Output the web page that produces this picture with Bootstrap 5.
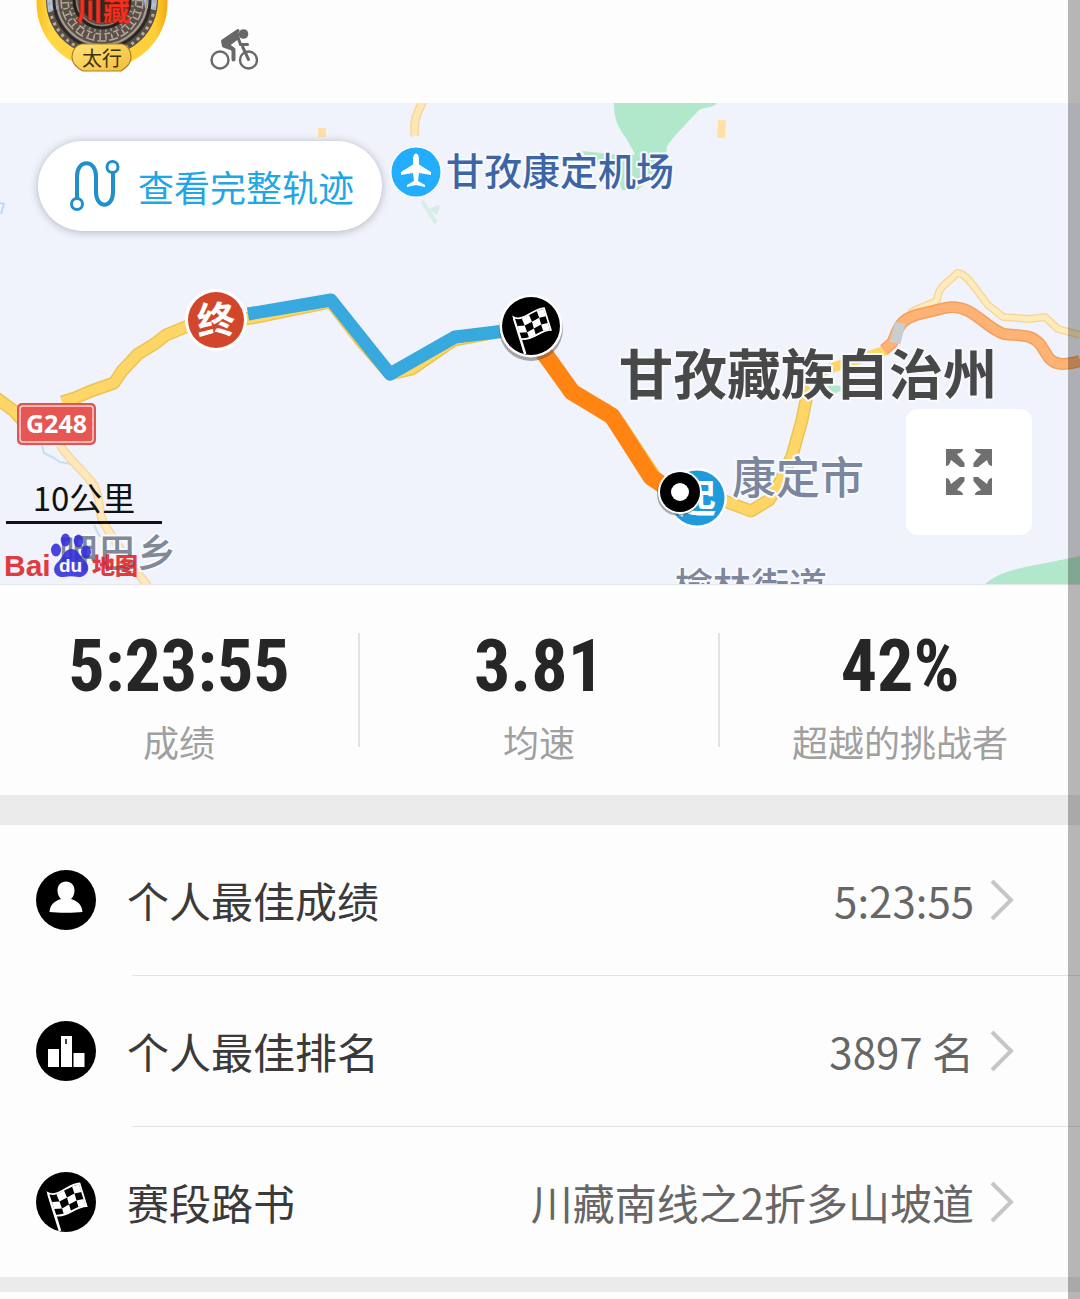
<!DOCTYPE html>
<html lang="zh-CN">
<head>
<meta charset="utf-8">
<meta name="viewport" content="width=device-width, initial-scale=1">
<title>赛段详情</title>
<link href="https://cdn.jsdelivr.net/npm/bootstrap@5.3.0/dist/css/bootstrap.min.css" rel="stylesheet">
<style>
body{font-family:"Noto Sans CJK SC","Noto Sans",sans-serif;background:#fdfdfd;color:#3a3a3a;overflow-x:hidden}
svg{display:block}
.seg-head{height:103px;padding-left:36px;gap:42px}
.bike{margin-top:28px}
.map-box{background:#f0f3fb;overflow:hidden;border-bottom:1px solid #e4e6ec}
.map-box>svg{width:100%;height:auto}
.track-btn{left:38px;top:38px;height:90px;padding:0 28px 0 32px;gap:16px;font-size:36px;line-height:48px;color:#1fa6e6;background:#fff;box-shadow:0 1px 8px rgba(60,60,80,.35)}
.track-btn:hover{background:#fff;color:#1fa6e6}
.full-btn{right:48px;bottom:49px;width:126px;height:126px;background:#fff;border-radius:12px}
.full-btn:hover{background:#fff}
.scale-bar{left:6px;top:374px;width:156px;height:47px;border-bottom:3px solid #111;font-size:33px;line-height:40px;color:#111}
.stats{padding:48px 0}
.stat-cell{height:114px}
.stat-cell:not(:last-child){border-right:2px solid #e3e3e3}
.stat-num{font-family:"Roboto Condensed",Roboto,sans-serif;font-weight:700;font-size:72px;line-height:68px;color:#262626}
.stat-label{font-size:36px;line-height:48px;padding-top:16px;color:#a0a0a0}
.band{height:30px;background:#ebebeb}
.band-thin{height:15px}
.info-row{height:150px;padding:0 66px 0 36px;gap:31px;font-size:42px;line-height:60px;color:#3a3a3a;text-decoration:none}
.info-val{color:#666}
.info-line{height:1px;margin-left:132px;background:#e4e4e4}
.edge-strip{right:0;top:0;bottom:0;width:12px;background:rgba(0,0,0,.28)}
</style>
<script src="https://cdn.jsdelivr.net/npm/bootstrap@5.3.0/dist/js/bootstrap.bundle.min.js"></script>
</head>
<body>
<svg width="0" height="0" class="position-absolute" aria-hidden="true">
  <defs>
    <symbol id="flag" viewBox="0 0 60 60">
      <circle cx="30" cy="30" r="30" fill="#000"/>
      <path d="M12.500 22 24 59" stroke="#fff" stroke-width="2.600" fill="none"/>
      <path d="M12 21C22 26 32 12 43.500 11.500L50.500 34C39 34 33 45 19.500 43.500Z" fill="#000" stroke="#fff" stroke-width="1.800"/>
      <path d="M20.500 22.500 28 18.500 31 25.500 23.500 29.500ZM36 14.500 43 12.500 45.500 20 38.500 21.500ZM16 30 23.500 29.500 26 36.500 18 37ZM31 25.500 38.500 21.500 40.500 28.500 33 32.500ZM26 36.500 33 32.500 35 39 28 42.500ZM40.500 28.500 47.500 27 49.500 33.500 42.500 35Z" fill="#fff"/>
    </symbol>
    <symbol id="chev" viewBox="0 0 24 42"><path d="M2 2 21 21 2 40" fill="none" stroke="#c6c6c6" stroke-width="4"/></symbol>
  </defs>
</svg>

<header class="seg-head d-flex align-items-start">
  <svg width="132" height="73" viewBox="36 0 132 73" role="img" aria-label="太行徽章">
    <defs>
      <linearGradient id="gold" x1="0" x2="1"><stop offset="0" stop-color="#fbbf1c"/><stop offset=".1" stop-color="#ffd645"/><stop offset=".9" stop-color="#ffcf38"/><stop offset="1" stop-color="#f3a90c"/></linearGradient>
      <linearGradient id="plate" x1="0" x2="1" y1="0" y2="1"><stop offset="0" stop-color="#ffe27a"/><stop offset="1" stop-color="#f4bd38"/></linearGradient>
    </defs>
    <circle cx="102" cy="3" r="65.500" fill="url(#gold)"/>
    <circle cx="102" cy="0" r="56" fill="#5b5048"/>
    <path d="M47 0h10l2 9-11 3zM157 0h-13l1 8 11 2z" fill="#a9c3dd"/>
    <g fill="none">
      <circle cx="102" cy="0" r="53" stroke="#b5aba0" stroke-width="3" stroke-dasharray="3 4"/>
      <circle cx="102" cy="0" r="48" stroke="#2c2825" stroke-width="3"/>
      <circle cx="102" cy="0" r="45" stroke="#a49a90" stroke-width="2"/>
      <circle cx="102" cy="0" r="41" stroke="#b3aaa0" stroke-width="1.500" stroke-dasharray="9 3"/>
      <circle cx="102" cy="0" r="37.500" stroke="#b3aaa0" stroke-width="5" stroke-dasharray="1.500 4.500"/>
      <circle cx="102" cy="0" r="34" stroke="#b3aaa0" stroke-width="1.500" stroke-dasharray="6 3"/>
      <circle cx="102" cy="0" r="31" stroke="#a1978c" stroke-width="3" stroke-dasharray="1.500 4"/>
      <circle cx="102" cy="0" r="28" stroke="#26211e" stroke-width="3"/>
      <circle cx="102" cy="0" r="25.500" stroke="#8c8379" stroke-width="1.500"/>
    </g>
    <circle cx="102" cy="0" r="22" fill="#2f2926"/>
    <text x="76" y="21" font-size="27" font-weight="900" fill="#f0321e" stroke="#8d1a12" stroke-width=".5" font-family="'Noto Sans CJK SC',sans-serif">川藏</text>
    <path d="M82 44h40c5 1 9 6 9 13 0 6-5 11-10 14H83c-6-3-11-8-11-14 0-7 4-12 10-13z" fill="url(#plate)" stroke="#a78227" stroke-width="1.200"/>
    <text x="102" y="66" font-size="20" text-anchor="middle" fill="#3b3212" font-family="'Noto Sans CJK SC',sans-serif">太行</text>
  </svg>
  <svg class="bike" width="48" height="43" viewBox="210 28 48 43" role="img" aria-label="骑行">
    <g fill="none" stroke="#686868" stroke-linecap="round" stroke-linejoin="round">
      <circle cx="220" cy="60" r="8.500" stroke-width="2.400"/><circle cx="248.500" cy="60" r="8.500" stroke-width="2.400"/>
      <path d="M238 30.500 222.500 41 223.500 46 233.500 49.500V59.500" stroke-width="3"/>
      <path d="M237.500 31.500 223.500 41.500 225.500 46 229 45 238.500 38Z" fill="#686868" stroke-width="2"/>
      <path d="M227 44.500 233.500 49.500V59.500" stroke-width="4"/>
      <path d="M237.500 36 240.500 44.500H247.500M242.500 46.500l6 13" stroke-width="3"/>
    </g>
    <circle cx="243.500" cy="34" r="4.800" fill="#686868"/>
  </svg>
</header>

<section class="map-box position-relative">
  <svg viewBox="0 103 1080 481" role="img" aria-label="赛段地图">
    <g fill="none" stroke-linejoin="round">
      <path d="M614 103C614 118 617 126 626 138L635 154 630 156 582 151 590 162 600 166 617 176 622 190 638 190 646 182 664 169 667 146C673 137 686 124 699 110 704 107 714 108 717 103Z" fill="#b1e8cb"/>
      <path d="M985 584C1004 568 1030 567 1080 556V584Z" fill="#b1e8cb"/>
      <path d="M822 384 840 386 843 390 833 394 828 392Z" fill="#b1e8cb"/>
      <path d="M422 201 436 223M428 212 438 207 435 214" stroke="#d7eee8" stroke-width="4"/>
      <path d="M423 101C418 112 413 118 415 136" stroke="#f8d79a" stroke-width="9"/><path d="M423 101C418 112 413 118 415 136" stroke="#ffe6b5" stroke-width="6"/>
      <path d="M722 120 721 138M322 128 322 137" stroke="#ffe1a6" stroke-width="8"/>
      <path d="M0 203 4 204 1 214" stroke="#b9daf6" stroke-width="2"/>
      <path d="M42 445 44 453 54 458 60 462 76 465M94 525 99 535 106 541" stroke="#c7def0" stroke-width="2"/>
      <path d="M60 445C69 460 83 470 94 485 103 505 96 511 106 527L128 561 148 586" stroke="#f7d7a2" stroke-width="9"/>
      <path d="M60 445C69 460 83 470 94 485 103 505 96 511 106 527L128 561 148 586" stroke="#ffe8bc" stroke-width="6"/>
      <path d="M-5 397 14 411 35 434M62 402 75 398 91 391 114 383 122 371 138 354 156 343 166 335 188 326 225 321 252 318 331 302 362 342 390 374 412 369 454 340 502 331M540 352 578 397 620 424 662 487M722 500 751 511 769 500 778 486 792 456 802 420 807 395" stroke="#ebc453" stroke-width="13"/>
      <path d="M-5 397 14 411 35 434M62 402 75 398 91 391 114 383 122 371 138 354 156 343 166 335 188 326 225 321 252 318 331 302 362 342 390 374 412 369 454 340 502 331M540 352 578 397 620 424 662 487M722 500 751 511 769 500 778 486 792 456 802 420 807 395 802 382 822 371 850 362 887 350" stroke="#fdd667" stroke-width="10"/>
      <path d="M910 313C920 306 934 304 937 300 939 284 947 285 957 273 966 272 976 290 988 305L1003 317 1030 319 1045 317 1058 329 1080 335" stroke="#f5d898" stroke-width="8"/>
      <path d="M910 313C920 306 934 304 937 300 939 284 947 285 957 273 966 272 976 290 988 305L1003 317 1030 319 1045 317 1058 329 1080 335" stroke="#ffebbd" stroke-width="5"/>
      <path d="M884 350 892 343C898 332 897 321 916 315L945 308C972 302 984 328 1004 334 1024 336 1030 334 1040 344L1049 358C1056 366 1066 365 1080 361" stroke="#f1a15f" stroke-width="12"/>
      <path d="M884 350 892 343C898 332 897 321 916 315L945 308C972 302 984 328 1004 334 1024 336 1030 334 1040 344L1049 358C1056 366 1066 365 1080 361" stroke="#feb273" stroke-width="9"/>
      <path d="M895 343 900 323" stroke="#cbccd0" stroke-width="11"/>
      <path d="M248 314 331 300 390 374 455 337 505 331" stroke="#38a9de" stroke-width="13"/>
      <path d="M542 350 572 392 612 416 651 477 670 490" stroke="#ff8412" stroke-width="17"/>
    </g>
    <g font-family="'Noto Sans CJK SC',sans-serif" font-weight="700" stroke="#f7f9fd" stroke-width="4" paint-order="stroke" stroke-linejoin="round">
      <text x="446" y="185" font-size="38" font-weight="500" fill="#3d65a5">甘孜康定机场</text>
      <text x="619" y="395" font-size="54" fill="#484848">甘孜藏族自治州</text>
      <text x="732" y="494" font-size="44" font-weight="500" fill="#7c869c">康定市</text>
      <text x="675" y="600" font-size="38" font-weight="500" fill="#7c869c">榆林街道</text>
      <text x="59" y="567" font-size="39" font-weight="500" fill="#808998">呷巴乡</text>
    </g>
    <circle cx="416" cy="172" r="26" fill="#fff"/><circle cx="416" cy="172" r="24.500" fill="#22adff"/>
    <path d="M416 153.500c2 0 3 3 3 6v5l12 7.500v3l-12-2-1 8 7 4v2l-9-2-9 2v-2l7-4-1-8-12 2v-3l12-7.500v-5c0-3 1-6 3-6z" fill="#fff"/>
    <circle cx="216" cy="320" r="31" fill="#fff"/><circle cx="216" cy="320" r="28" fill="#d2472c"/>
    <text x="216" y="334" font-size="38" font-weight="700" text-anchor="middle" fill="#fff" font-family="'Noto Sans CJK SC',sans-serif" transform="rotate(-4 216 320)">终</text>
    <circle cx="531" cy="329" r="32" fill="#555" opacity=".5"/><circle cx="531" cy="326" r="31.500" fill="#fff"/>
    <use href="#flag" x="502" y="297" width="58" height="58"/>
    <circle cx="697" cy="498" r="30" fill="#fff"/><circle cx="697" cy="498" r="27.500" fill="#1e9bdc"/>
    <text x="697" y="512" font-size="38" font-weight="700" text-anchor="middle" fill="#fff" font-family="'Noto Sans CJK SC',sans-serif">起</text>
    <circle cx="679" cy="494" r="22" fill="#555" opacity=".5"/><circle cx="680" cy="492" r="22" fill="#fff"/><circle cx="680" cy="492" r="20" fill="#000"/><circle cx="680" cy="492" r="9" fill="#fff"/>
    <rect x="17" y="403" width="79" height="42" rx="5" fill="#df5552"/><rect x="20" y="406" width="73" height="36" rx="3" fill="#e65652" stroke="#fbd5d3" stroke-width="1.500"/>
    <text x="56.500" y="433" font-size="25" font-weight="700" text-anchor="middle" fill="#fff" font-family="'Noto Sans',sans-serif">G248</text>
    <g opacity=".88">
      <text x="4" y="576" font-size="30" font-weight="700" fill="#dc2328" font-family="'Liberation Sans',sans-serif">Bai</text>
      <g fill="#322ddb"><ellipse cx="56" cy="550" rx="5" ry="6.500"/><ellipse cx="65.500" cy="540" rx="4.800" ry="6.500"/><ellipse cx="78.500" cy="541" rx="4.800" ry="6.500"/><ellipse cx="86" cy="552" rx="5" ry="6.500"/><path d="M71 549c8 0 9 8 14 12 8 8 0 17-7 16-5-1-9-1-14 0-9 1-13-8-7-14 6-5 7-14 14-14z"/></g>
      <text x="70.500" y="572" font-size="19" font-weight="700" text-anchor="middle" fill="#fff" font-family="'Liberation Sans',sans-serif">du</text>
      <text x="92" y="574" font-size="23" font-weight="900" fill="#dc2328" font-family="'Noto Sans CJK SC',sans-serif">地图</text>
    </g>
  </svg>
  <button type="button" class="track-btn btn border-0 rounded-pill position-absolute d-flex align-items-center">
    <svg width="52" height="54" viewBox="1 1 52 54" fill="none" stroke="#218fc9" stroke-width="4" aria-hidden="true"><path d="M8 40V18C8 1 27 1 27 18V34C27 51 44 51 44 34V14"/><circle cx="8" cy="46" r="5.500" stroke-width="3"/><circle cx="43.500" cy="9" r="5.500" stroke-width="3"/></svg>
    <span>查看完整轨迹</span>
  </button>
  <div class="scale-bar position-absolute text-center">10公里</div>
  <button type="button" class="full-btn btn border-0 p-0 position-absolute d-flex align-items-center justify-content-center" aria-label="全屏地图">
    <svg width="46" height="46" viewBox="0 0 46 46" fill="#6f6f6f" aria-hidden="true"><defs><path id="arr" d="M0 0H17C17 3 14 4 11 5L18.500 14V18H14L5 11C4 14 3 17 0 17Z"/></defs><use href="#arr"/><use href="#arr" transform="matrix(-1 0 0 1 46 0)"/><use href="#arr" transform="matrix(1 0 0 -1 0 46)"/><use href="#arr" transform="matrix(-1 0 0 -1 46 46)"/></svg>
  </button>
</section>

<section class="stats row g-0 text-center">
  <div class="col-4 stat-cell"><div class="stat-num">5:23:55</div><div class="stat-label">成绩</div></div>
  <div class="col-4 stat-cell"><div class="stat-num">3.81</div><div class="stat-label">均速</div></div>
  <div class="col-4 stat-cell"><div class="stat-num">42%</div><div class="stat-label">超越的挑战者</div></div>
</section>
<div class="band"></div>

<nav aria-label="赛段信息">
  <a href="#best-time" class="info-row d-flex align-items-center">
    <svg width="60" height="60" viewBox="0 0 60 60" aria-hidden="true"><circle cx="30" cy="30" r="30"/><path d="M30 11.500c5 0 8.500 3.500 8.500 9 0 4-1.500 6.500-3.500 8.500 6 2 11 5 11.500 13-8 1-25 1-33 0 .5-8 5.500-11 11.500-13-2-2-3.500-4.500-3.500-8.500 0-5.500 3.500-9 8.500-9z" fill="#fff"/></svg>
    <span class="flex-grow-1">个人最佳成绩</span>
    <span class="info-val d-flex align-items-center gap-3"><span>5:23:55</span><svg width="24" height="42"><use href="#chev"/></svg></span>
  </a>
  <div class="info-line"></div>
  <a href="#best-rank" class="info-row d-flex align-items-center">
    <svg width="60" height="60" viewBox="0 0 60 60" aria-hidden="true"><circle cx="30" cy="30" r="30"/><path d="M12 28h11v18H12zM25 15h11v31H25zM37.500 32h11v14h-11z" fill="#fff"/><path d="M30 18v5" stroke="#000" stroke-width="1.500"/></svg>
    <span class="flex-grow-1">个人最佳排名</span>
    <span class="info-val d-flex align-items-center gap-3"><span>3897 名</span><svg width="24" height="42"><use href="#chev"/></svg></span>
  </a>
  <div class="info-line"></div>
  <a href="#route-book" class="info-row d-flex align-items-center">
    <svg width="60" height="60" aria-hidden="true"><use href="#flag"/></svg>
    <span class="flex-grow-1">赛段路书</span>
    <span class="info-val d-flex align-items-center gap-3"><span>川藏南线之2折多山坡道</span><svg width="24" height="42"><use href="#chev"/></svg></span>
  </a>
</nav>
<div class="band band-thin"></div>
<div class="edge-strip position-fixed"></div>
</body>
</html>
